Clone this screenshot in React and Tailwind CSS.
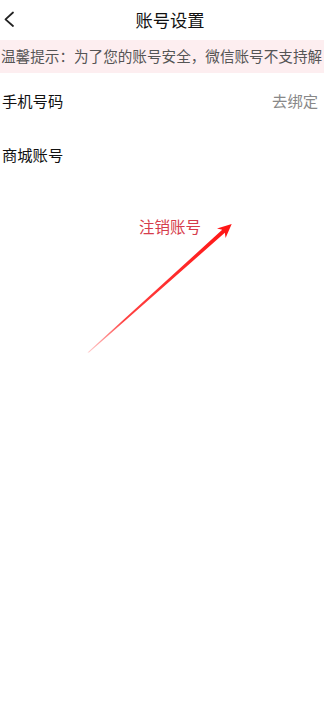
export default function App() {
  const font = { fontFamily: '"Noto Sans CJK SC", "Noto Sans", sans-serif' };
  return (
    <div className="relative w-[324px] h-[727px] bg-white overflow-hidden" style={font}>
      <div className="h-[40px] flex items-center relative">
        <svg className="absolute left-0 top-0" width="24" height="40" viewBox="0 0 24 40">
          <path d="M13 12.5 L5.5 19.3 L13 26" fill="none" stroke="#222" strokeWidth="1.8" strokeLinecap="round" strokeLinejoin="round" />
        </svg>
        <div className="w-full pl-[16px] text-center text-[17.3px] leading-none text-[#111]">账号设置</div>
      </div>
      <div className="h-[33px] bg-[#fdeef0] flex items-center overflow-hidden whitespace-nowrap pl-[1px] text-[14.6px] text-[#555] leading-none">
        温馨提示：为了您的账号安全，微信账号不支持解
      </div>
      <div className="h-[55px] flex items-center justify-between pl-[2px] pr-[6px]">
        <span className="text-[15.3px] text-[#111] leading-none">手机号码</span>
        <span className="text-[15.3px] text-[#888] leading-none">去绑定</span>
      </div>
      <div className="h-[54px] flex items-center pl-[2px]">
        <span className="text-[15.3px] text-[#111] leading-none">商城账号</span>
      </div>
      <div className="pt-[37px] pl-[139px] text-[15.5px] text-[#d63c4c] leading-none">注销账号</div>
      <svg className="absolute left-0 top-0 pointer-events-none" width="324" height="727" viewBox="0 0 324 727">
        <defs>
          <linearGradient id="ag" x1="88" y1="352" x2="232" y2="224" gradientUnits="userSpaceOnUse">
            <stop offset="0" stopColor="#ff3030" stopOpacity="0.25" />
            <stop offset="0.25" stopColor="#ff2020" stopOpacity="0.85" />
            <stop offset="1" stopColor="#ff1414" stopOpacity="1" />
          </linearGradient>
        </defs>
        <polygon points="87.5,352.5 89,352.6 224.8,232.8 225.6,238 231.7,224 217,228.6 222.2,229.8" fill="url(#ag)" />
      </svg>
    </div>
  );
}
